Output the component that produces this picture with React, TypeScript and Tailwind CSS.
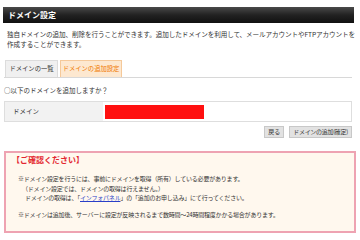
export default function App() {
  const font = { fontFamily: '"Noto Sans CJK JP", "Noto Sans", sans-serif' };
  return (
    <div style={font} className="w-[360px] h-[240px] bg-white overflow-hidden text-[#333]">
      <div className="mx-[3px] mt-[7px] h-[16px] w-[351px] bg-gradient-to-b from-[#4a4a4a] via-[#222] to-[#111] flex items-center pl-[5px]">
        <span className="text-white font-bold text-[8px] leading-none">ドメイン設定</span>
      </div>

      <div className="mt-[6px] px-[7px] text-[6.6px] leading-[10px] whitespace-nowrap">
        <p className="tracking-[-0.1px]">独自ドメインの追加、削除を行うことができます。追加したドメインを利用して、メールアカウントやFTPアカウントを</p>
        <p>作成することができます。</p>
      </div>

      <div className="mt-[11px] ml-[4px] w-[348px] flex items-end gap-[2px] border-b border-[#d8d8d8] pl-[1px]">
        <div className="w-[53px] h-[17px] flex items-center justify-center bg-[#f0f0f0] border border-b-0 border-[#dcdcdc] text-[6.3px]">
          ドメインの一覧
        </div>
        <div className="w-[62px] h-[17px] flex items-center justify-center bg-[#fde8d0] border border-b-0 border-[#f5c99a] text-[6.3px] text-[#f07800]">
          ドメインの追加設定
        </div>
      </div>

      <p className="mt-[7px] ml-[4px] text-[6.5px] leading-[10px]">○以下のドメインを追加しますか？</p>

      <div className="mt-[6px] ml-[4px] w-[348px] h-[21px] flex border border-[#dedede]">
        <div className="w-[98px] bg-[#f2f2f2] flex items-center pl-[8px] text-[6.5px]">ドメイン</div>
        <div className="flex-1 flex items-center pl-[2px]">
          <div className="w-[99px] h-[14px] bg-[#ff1010]" />
        </div>
      </div>

      <div className="mt-[4px] w-[352px] flex justify-end gap-[5px]">
        <div className="h-[12px] px-[3px] flex items-center bg-[#e2e2e2] border border-[#c8c8c8] text-[6px] leading-none">
          戻る
        </div>
        <div className="h-[12px] px-[3px] flex items-center bg-[#e2e2e2] border border-[#c8c8c8] text-[6px] leading-none tracking-[-0.3px]">
          ドメインの追加(確定)
        </div>
      </div>

      <div className="mt-[13px] ml-[4px] w-[352px] h-[82px] border-2 border-[#eea3b2] bg-[#fff8ee] px-[6px] pt-[1px]">
        <p className="text-[#e3262e] font-bold text-[8px] leading-[12px]">【ご確認ください】</p>
        <div className="mt-[8px] text-[6px] leading-[9.5px] tracking-[-0.2px] whitespace-nowrap">
          <p className="pl-[6px]">※ドメイン設定を行うには、事前にドメインを取得（所有）している必要があります。</p>
          <p className="pl-[10px]">（ドメイン設定では、ドメインの取得は行えません。）</p>
          <p className="pl-[13px]">
            ドメインの取得は、「<span className="text-[#2a3fc8] underline">インフォパネル</span>」の「追加のお申し込み」にて行ってください。
          </p>
          <p className="pl-[6px] mt-[7px]">※ドメインは追加後、サーバーに設定が反映されるまで数時間～24時間程度かかる場合があります。</p>
        </div>
      </div>
    </div>
  );
}
